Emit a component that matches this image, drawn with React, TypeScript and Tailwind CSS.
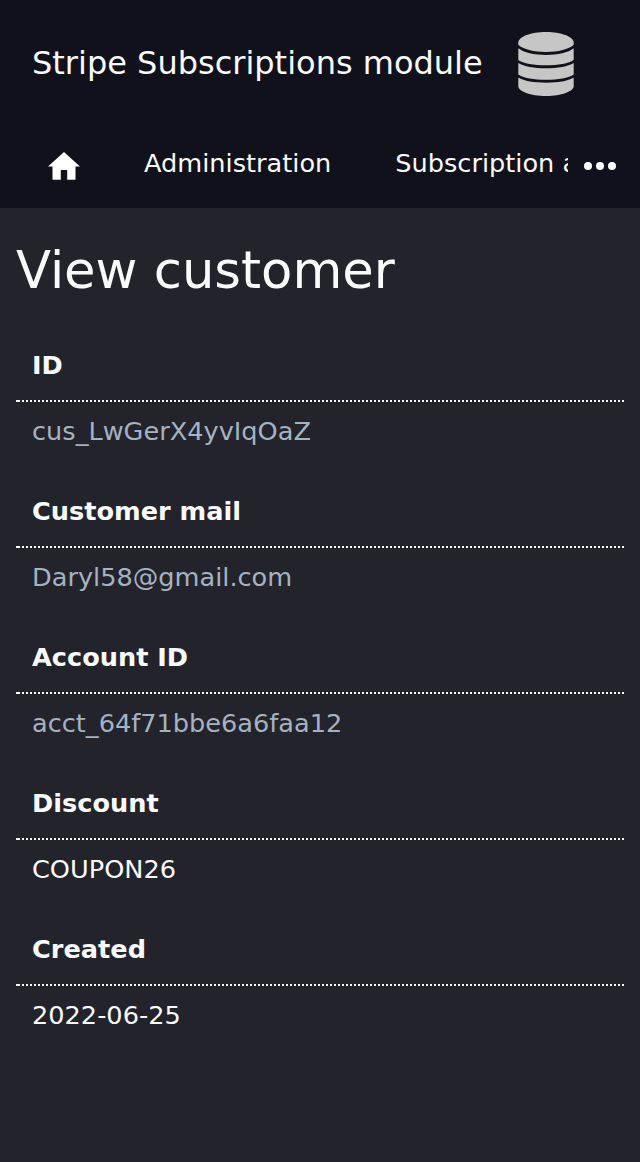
const fields = [
  { label: "ID", value: "cus_LwGerX4yvIqOaZ", link: true },
  { label: "Customer mail", value: "Daryl58@gmail.com", link: true },
  { label: "Account ID", value: "acct_64f71bbe6a6faa12", link: true },
  { label: "Discount", value: "COUPON26", link: false },
  { label: "Created", value: "2022-06-25", link: false },
];

function DatabaseIcon() {
  return (
    <svg className="h-16 w-14 shrink-0" viewBox="0 0 56 64" fill="#c6c6c6">
      <path d="M28 0C43 0 55.700 4.700 55.700 10.500V12.800C51 17.500 40 20 28 20S5 17.500 .3 12.800V10.500C.3 4.700 13 0 28 0Z" />
      <path d="M.3 16.300C6 20.800 16 22.900 28 22.900S50 20.800 55.700 16.300V27.900C51 31.300 40 33.300 28 33.300S5 31.300 .3 27.900Z" />
      <path d="M.3 31C6 34.500 16 36.300 28 36.300S50 34.500 55.700 31V42.500C51 46 40 47.800 28 47.800S5 46 .3 42.500Z" />
      <path d="M.3 45.600C6 49 16 50.800 28 50.800S50 49 55.700 45.600V54C55.700 59.500 43.300 64 28 64S.3 59.500 .3 54Z" />
    </svg>
  );
}

export default function App() {
  return (
    <div className="min-h-[1162px] bg-[#23232b] font-['DejaVu_Sans',sans-serif] text-[#f9fafb]">
      <header className="h-[208px] bg-[#11111b]">
        <div className="flex h-32 items-center gap-[35px] pl-8">
          <span className="pb-0.5 text-[32px] leading-10">Stripe Subscriptions module</span>
          <DatabaseIcon />
        </div>
        <nav className="flex h-[76px] items-center whitespace-nowrap text-[25.6px] leading-[30px]">
          <svg className="ml-12 h-8 w-8 shrink-0" viewBox="0 0 32 32" fill="white">
            <path d="M16 2 0 16.500h4.500V29.700h8.300V20h6.400v9.700h8.300V16.500H32z" />
          </svg>
          <span className="ml-16 pb-1.5">Administration</span>
          <span className="ml-16 w-[173px] overflow-hidden pb-1.5">Subscription a</span>
          <svg className="ml-4 h-8 w-8" viewBox="0 0 32 32" fill="white">
            <circle cx="4" cy="16" r="4" /><circle cx="16" cy="16" r="4" /><circle cx="28" cy="16" r="4" />
          </svg>
        </nav>
      </header>
      <main className="px-4 pt-8">
        <h1 className="text-[51.2px] leading-[60px]">View customer</h1>
        <dl className="mt-7 text-[25.6px] leading-[30px]">
          {fields.map((f) => (
            <div key={f.label} className="h-[146px]">
              <dt className="h-[72px] px-4 pt-[22px] font-bold">{f.label}</dt>
              <dd>
                <div className="h-0.5 border-l-2 border-white bg-[repeating-linear-gradient(to_right,white_0px,white_2px,transparent_2px,transparent_4px)]" />
                <div className={f.link ? "px-4 pt-3.5 text-[#a5b3c1]" : "px-4 pt-3.5"}>{f.value}</div>
              </dd>
            </div>
          ))}
        </dl>
      </main>
    </div>
  );
}
